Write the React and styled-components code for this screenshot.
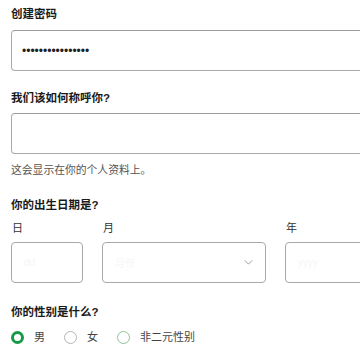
import React from "react";
import styled, { createGlobalStyle } from "styled-components";

const GlobalStyle = createGlobalStyle`
  html, body {
    margin: 0;
    padding: 0;
    background: #ffffff;
  }
  body {
    font-family: "Liberation Sans", "Noto Sans CJK SC", sans-serif;
    color: #222;
  }
`;

function App() {
  return (
    <>
      <GlobalStyle />
      <Page>
        <Label $top={6}>创建密码</Label>
        <Field $top={8}>
          <Dots>••••••••••••••••</Dots>
        </Field>

        <Label $top={19}>我们该如何称呼你?</Label>
        <Field $top={7} />
        <Helper>这会显示在你的个人资料上。</Helper>

        <Label $top={19}>你的出生日期是?</Label>
        <DateRow>
          <DateCol>
            <SmallLabel>日</SmallLabel>
            <DateBox>
              <Ghost>dd</Ghost>
            </DateBox>
          </DateCol>
          <DateCol>
            <SmallLabel>月</SmallLabel>
            <DateBox>
              <Ghost>月份</Ghost>
              <Chevron viewBox="0 0 10 6" width="9" height="5">
                <path d="M0.5 0.5 L5 5 L9.5 0.5" fill="none" stroke="#8a8a8a" strokeWidth="1" />
              </Chevron>
            </DateBox>
          </DateCol>
          <DateCol>
            <SmallLabel>年</SmallLabel>
            <DateBox>
              <Ghost>yyyy</Ghost>
            </DateBox>
          </DateCol>
        </DateRow>

        <Label $top={21}>你的性别是什么?</Label>
        <RadioRow>
          <RadioItem>
            <Radio $checked />
            <RadioText>男</RadioText>
          </RadioItem>
          <RadioItem>
            <Radio />
            <RadioText>女</RadioText>
          </RadioItem>
          <RadioItem>
            <Radio $hover />
            <RadioText>非二元性别</RadioText>
          </RadioItem>
        </RadioRow>
      </Page>
    </>
  );
}

export default App;

const Page = styled.div`
  width: 349px;
  height: 360px;
  overflow: hidden;
  padding-left: 11px;
  display: flex;
  flex-direction: column;
`;

const Label = styled.div`
  margin-top: ${(p) => p.$top}px;
  font-size: 11.5px;
  line-height: 16px;
  font-weight: 700;
  color: #1a1a1a;
  white-space: nowrap;
`;

const Field = styled.div`
  margin-top: ${(p) => p.$top || 0}px;
  width: 420px;
  height: 41px;
  flex-shrink: 0;
  box-sizing: border-box;
  border: 1px solid #a9a9a9;
  border-top-color: #9c9c9c;
  border-radius: 4px;
  display: flex;
  align-items: center;
  padding-left: 10px;
`;

const Dots = styled.span`
  font-size: 12px;
  color: #222;
  letter-spacing: 0;
  line-height: 1;
`;

const Helper = styled.div`
  margin-top: 8px;
  font-size: 10.8px;
  line-height: 16px;
  color: #555;
  white-space: nowrap;
`;

const DateRow = styled.div`
  margin-top: 7px;
  display: grid;
  grid-template-columns: 72px 164px 120px;
  column-gap: 19px;
`;

const DateCol = styled.div`
  display: flex;
  flex-direction: column;
`;

const SmallLabel = styled.div`
  font-size: 11px;
  line-height: 16px;
  color: #333;
  padding-left: 1px;
`;

const DateBox = styled.div`
  margin-top: 6px;
  height: 41px;
  box-sizing: border-box;
  border: 1px solid #a9a9a9;
  border-radius: 4px;
  display: flex;
  align-items: center;
  justify-content: space-between;
  padding: 0 12px 0 12px;
`;

const Ghost = styled.span`
  font-size: 10px;
  color: #f6f6f6;
`;

const Chevron = styled.svg`
  display: block;
`;

const RadioRow = styled.div`
  margin-top: 9px;
  display: flex;
  align-items: center;
  gap: 19px;
  height: 16px;
`;

const RadioItem = styled.label`
  display: flex;
  align-items: center;
  gap: 10px;
`;

const Radio = styled.span`
  width: 13px;
  height: 13px;
  box-sizing: border-box;
  border-radius: 50%;
  background: #fff;
  border: ${(p) =>
    p.$checked ? "3.5px solid #179a45" : p.$hover ? "1px solid #8fbf9c" : "1px solid #b5b5b5"};
`;

const RadioText = styled.span`
  font-size: 11px;
  line-height: 16px;
  color: #444;
  white-space: nowrap;
`;
